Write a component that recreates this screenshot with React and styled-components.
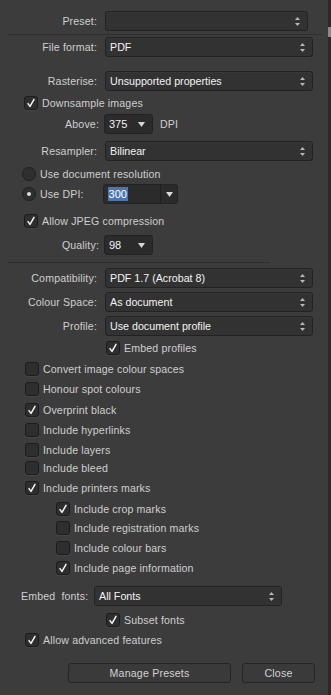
import React from "react";
import styled, { createGlobalStyle } from "styled-components";

const Global = createGlobalStyle`
  html, body {
    margin: 0;
    padding: 0;
    background: #3c3c3c;
  }
  body {
    font-family: "Liberation Sans", Arial, sans-serif;
    font-size: 10.6px;
    color: #cfcfcf;
  }
`;

const Page = styled.div`
  display: flex;
  width: 331px;
  height: 695px;
  overflow: hidden;
`;

const Panel = styled.div`
  flex: 1;
  display: flex;
  flex-direction: column;
  padding-top: 11px;
`;

const ScrollStrip = styled.div`
  width: 3px;
  background: #2a2a2a;
  display: flex;
  flex-direction: column;
  padding-top: 27px;
`;

const Thumb = styled.div`
  height: 10px;
  background: #8a8a8a;
`;

const Separator = styled.div`
  height: 1px;
  background: #2f2f2f;
  margin: ${(p) => p.$mt}px 0 0 7px;
  width: ${(p) => p.$w}px;
`;

const Row = styled.div`
  display: flex;
  align-items: center;
  height: ${(p) => p.$h || 20}px;
  margin-top: ${(p) => p.$mt || 0}px;
  padding-left: ${(p) => p.$indent || 0}px;
`;

const Label = styled.div`
  width: ${(p) => p.$w || 97}px;
  margin-right: ${(p) => p.$gap || 8}px;
  text-align: ${(p) => p.$align || "right"};
  letter-spacing: 0.15px;
  white-space: nowrap;
  word-spacing: ${(p) => p.$ws || 0}px;
`;

const Select = styled.div`
  position: relative;
  box-sizing: border-box;
  width: ${(p) => p.$w}px;
  height: 20px;
  background: #323232;
  border: 1px solid #222;
  border-radius: 3px;
  box-shadow: inset 0 1px 0 rgba(255, 255, 255, 0.03);
  display: flex;
  align-items: center;
  padding-left: 4px;
  color: #f2f2f2;
  font-size: 10.7px;
`;

const Stepper = styled.svg`
  position: absolute;
  right: 7px;
  top: 5px;
`;

const Arrows = () => (
  <Stepper width="5" height="9" viewBox="0 0 5 9">
    <path d="M2.5 0 L5 3 L0 3 Z" fill="#b8b8b8" />
    <path d="M0 6 L5 6 L2.5 9 Z" fill="#b8b8b8" />
  </Stepper>
);

const Combo = styled.div`
  position: relative;
  box-sizing: border-box;
  width: ${(p) => p.$w}px;
  height: ${(p) => p.$h || 20}px;
  background: #2b2b2b;
  border: 1px solid #232323;
  border-radius: 3px;
  display: flex;
  align-items: center;
  padding-left: 4px;
  color: #f2f2f2;
  font-size: 11px;
`;

const Caret = styled.svg`
  position: absolute;
  right: ${(p) => p.$r}px;
  top: 50%;
  margin-top: -2px;
`;

const Down = ({ r }) => (
  <Caret $r={r} width="7" height="5" viewBox="0 0 7 5">
    <path d="M0 0 L7 0 L3.5 5 Z" fill="#d8d8d8" />
  </Caret>
);

const DropPart = styled.div`
  position: absolute;
  right: 0;
  top: 0;
  bottom: 0;
  width: 16px;
  border-left: 1px solid #1f1f1f;
`;

const Selected = styled.span`
  background: #4a77b4;
  color: #fff;
  padding: 1px 1px;
`;

const Unit = styled.span`
  margin-left: 7px;
  letter-spacing: 0.2px;
`;

const Box = styled.div`
  box-sizing: border-box;
  width: 14px;
  height: 14px;
  flex: none;
  border-radius: 3px;
  background: #2e2e2e;
  border: 1px solid #1c1c1c;
  box-shadow: 0 1px 0 rgba(255, 255, 255, 0.05);
  display: flex;
  align-items: center;
  justify-content: center;
  margin-right: 4px;
`;

const Radio = styled.div`
  box-sizing: border-box;
  width: 14px;
  height: 14px;
  flex: none;
  border-radius: 50%;
  background: #2f2f2f;
  border: 1px solid #1f1f1f;
  display: flex;
  align-items: center;
  justify-content: center;
  margin-right: 4px;
`;

const Dot = styled.div`
  width: 4px;
  height: 4px;
  border-radius: 50%;
  background: #dcdcdc;
`;

const Text = styled.span`
  letter-spacing: 0.15px;
  white-space: nowrap;
`;

const Check = ({ on, children }) => (
  <>
    <Box>
      {on && (
        <svg width="10" height="10" viewBox="0 0 10 10">
          <path
            d="M2 5.6 L4 8.4 L8 1.4"
            fill="none"
            stroke="#f4f4f4"
            strokeWidth="1.5"
            strokeLinecap="round"
            strokeLinejoin="round"
          />
        </svg>
      )}
    </Box>
    <Text>{children}</Text>
  </>
);

const Buttons = styled.div`
  display: flex;
  margin-top: 13px;
  padding-left: 68px;
  gap: 11px;
`;

const Button = styled.div`
  box-sizing: border-box;
  width: ${(p) => p.$w}px;
  height: 20px;
  border: 1px solid #252525;
  border-radius: 3px;
  background: #3a3a3a;
  display: flex;
  align-items: center;
  justify-content: center;
  letter-spacing: 0.2px;
  color: #d2d2d2;
`;

const App = () => (
  <Page>
    <Global />
    <Panel>
      <Row>
        <Label>Preset:</Label>
        <Select $w={203}>
          <Arrows />
        </Select>
      </Row>
      <Separator $mt={3} $w={315} />
      <Row $mt={2}>
        <Label>File format:</Label>
        <Select $w={208}>
          PDF
          <Arrows />
        </Select>
      </Row>
      <Row $mt={14}>
        <Label>Rasterise:</Label>
        <Select $w={208}>
          Unsupported properties
          <Arrows />
        </Select>
      </Row>
      <Row $mt={2} $indent={24}>
        <Check on>Downsample images</Check>
      </Row>
      <Row $mt={1}>
        <Label $w={99} $gap={5}>Above:</Label>
        <Combo $w={49}>
          375
          <Down r={7} />
        </Combo>
        <Unit>DPI</Unit>
      </Row>
      <Row $mt={7}>
        <Label>Resampler:</Label>
        <Select $w={208}>
          Bilinear
          <Arrows />
        </Select>
      </Row>
      <Row $mt={3} $indent={22}>
        <Radio />
        <Text>Use document resolution</Text>
      </Row>
      <Row $indent={22}>
        <Radio>
          <Dot />
        </Radio>
        <Text>Use DPI:</Text>
        <Combo $w={75} style={{ marginLeft: 19 }}>
          <Selected>300</Selected>
          <DropPart>
            <Down r={4} />
          </DropPart>
        </Combo>
      </Row>
      <Row $mt={7} $indent={24}>
        <Check on>Allow JPEG compression</Check>
      </Row>
      <Row $mt={4}>
        <Label $w={99} $gap={5}>Quality:</Label>
        <Combo $w={49}>
          98
          <Down r={7} />
        </Combo>
      </Row>
      <Separator $mt={7} $w={263} />
      <Row $mt={5}>
        <Label>Compatibility:</Label>
        <Select $w={208}>
          PDF 1.7 (Acrobat 8)
          <Arrows />
        </Select>
      </Row>
      <Row $mt={4}>
        <Label>Colour Space:</Label>
        <Select $w={208}>
          As document
          <Arrows />
        </Select>
      </Row>
      <Row $mt={4}>
        <Label>Profile:</Label>
        <Select $w={208}>
          Use document profile
          <Arrows />
        </Select>
      </Row>
      <Row $mt={2} $indent={106}>
        <Check on>Embed profiles</Check>
      </Row>
      <Row $mt={1} $indent={25}>
        <Check>Convert image colour spaces</Check>
      </Row>
      <Row $indent={25}>
        <Check>Honour spot colours</Check>
      </Row>
      <Row $mt={1} $indent={25}>
        <Check on>Overprint black</Check>
      </Row>
      <Row $indent={25}>
        <Check>Include hyperlinks</Check>
      </Row>
      <Row $indent={25}>
        <Check>Include layers</Check>
      </Row>
      <Row $mt={-2} $indent={25}>
        <Check>Include bleed</Check>
      </Row>
      <Row $indent={25}>
        <Check on>Include printers marks</Check>
      </Row>
      <Row $mt={1} $indent={56}>
        <Check on>Include crop marks</Check>
      </Row>
      <Row $mt={-1} $indent={56}>
        <Check>Include registration marks</Check>
      </Row>
      <Row $indent={56}>
        <Check>Include colour bars</Check>
      </Row>
      <Row $indent={56}>
        <Check on>Include page information</Check>
      </Row>
      <Row $mt={8} $indent={21}>
        <Label $w={67} $gap={6} $align="left" $ws={3}>
          Embed fonts:
        </Label>
        <Select $w={188}>
          All Fonts
          <Arrows />
        </Select>
      </Row>
      <Row $mt={4} $indent={106}>
        <Check on>Subset fonts</Check>
      </Row>
      <Row $indent={25}>
        <Check on>Allow advanced features</Check>
      </Row>
      <Buttons>
        <Button $w={163}>Manage Presets</Button>
        <Button $w={73}>Close</Button>
      </Buttons>
    </Panel>
    <ScrollStrip>
      <Thumb />
    </ScrollStrip>
  </Page>
);

export default App;
